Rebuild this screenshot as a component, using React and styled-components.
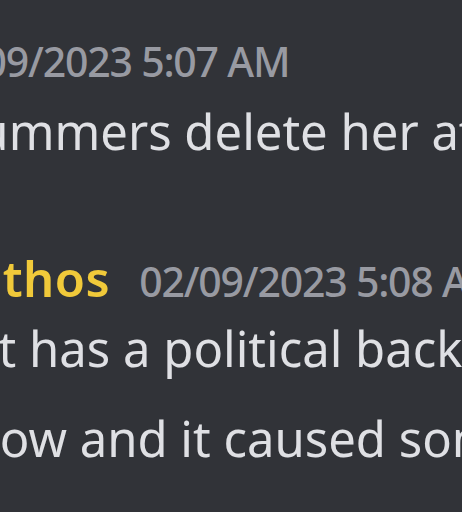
import styled, { createGlobalStyle } from 'styled-components'

const GlobalStyle = createGlobalStyle`
  html, body {
    margin: 0;
    padding: 0;
    background: #313338;
  }
`

export default function App() {
  return (
    <>
      <GlobalStyle />
      <Chat>
        {messages.map((msg) => (
          <MessageGroup key={msg.time} gap={msg.gap}>
            <Header shift={msg.headerShift}>
              <Username color={msg.color}>{msg.author}</Username>
              <Timestamp>{msg.time}</Timestamp>
            </Header>
            {msg.lines.map((line) => (
              <Line key={line.text} shift={line.shift} gap={line.gap}>
                {line.text}
              </Line>
            ))}
          </MessageGroup>
        ))}
      </Chat>
    </>
  )
}

//#region Data
const messages = [
  {
    author: 'Lumen',
    color: '#c9cdfb',
    time: '02/09/2023 5:07 AM',
    headerShift: -272,
    gap: 24,
    lines: [
      { text: 'drummers delete her attempt', shift: -72, gap: 3 }
    ]
  },
  {
    author: 'Xanthos',
    color: '#f0c93a',
    time: '02/09/2023 5:08 AM',
    headerShift: -90,
    gap: 77,
    lines: [
      { text: 'It has a political background', shift: -18, gap: 0 },
      { text: 'show and it caused some', shift: -54, gap: 18 }
    ]
  }
]
//#endregion

//#region STYLED COMPONENTS
const Chat = styled.main`
  width: 462px;
  height: 512px;
  overflow: hidden;
  display: flex;
  flex-direction: column;
  background: #313338;
  font-family: 'Noto Sans', 'Open Sans', sans-serif;
`

const MessageGroup = styled.section`
  display: flex;
  flex-direction: column;
  margin-top: ${({ gap }) => gap}px;
`

const Header = styled.div`
  white-space: nowrap;
  font-size: 49px;
  line-height: 68px;
  height: 68px;
  margin-left: ${({ shift }) => shift}px;
`

const Username = styled.span`
  color: ${({ color }) => color};
  font-weight: 600;
  letter-spacing: 0.5px;
`

const Timestamp = styled.span`
  font-size: 41px;
  font-weight: 500;
  line-height: 1;
  letter-spacing: -1.2px;
  color: #989aa2;
  margin-left: 29px;
`

const Line = styled.div`
  white-space: nowrap;
  font-size: 49px;
  line-height: 72px;
  height: 72px;
  color: #dfe0e4;
  margin-left: ${({ shift }) => shift}px;
  margin-top: ${({ gap }) => gap}px;
`
//#endregion
